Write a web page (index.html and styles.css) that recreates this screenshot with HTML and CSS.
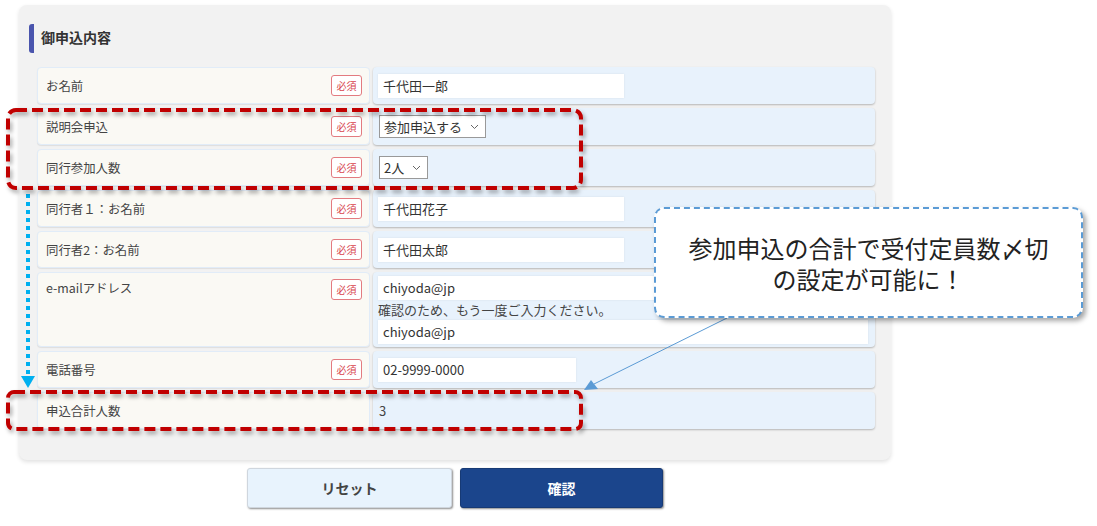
FILE: index.html
```html
<!DOCTYPE html>
<html lang="ja">
<head>
  <meta charset="UTF-8">
  <title>御申込内容</title>
  <link rel="stylesheet" href="styles.css">
</head>
<body>
  <div class="page">
    <div class="panel">
      <h2 class="panel-title">御申込内容</h2>

      <div class="rows">
        <div class="row">
          <div class="label">お名前<span class="req">必須</span></div>
          <div class="value"><div class="input w-name">千代田一郎</div></div>
        </div>
        <div class="row">
          <div class="label">説明会申込<span class="req">必須</span></div>
          <div class="value">
            <div class="select">参加申込する<svg width="9" height="6" viewBox="0 0 9 6"><path d="M1 1l3.5 3.5L8 1" fill="none" stroke="#666" stroke-width="1"/></svg></div>
          </div>
        </div>
        <div class="row">
          <div class="label">同行参加人数<span class="req">必須</span></div>
          <div class="value">
            <div class="select">2人<svg width="9" height="6" viewBox="0 0 9 6"><path d="M1 1l3.5 3.5L8 1" fill="none" stroke="#666" stroke-width="1"/></svg></div>
          </div>
        </div>
        <div class="row">
          <div class="label">同行者１：お名前<span class="req">必須</span></div>
          <div class="value"><div class="input w-name">千代田花子</div></div>
        </div>
        <div class="row">
          <div class="label">同行者2：お名前<span class="req">必須</span></div>
          <div class="value"><div class="input w-name">千代田太郎</div></div>
        </div>
        <div class="row row-tall">
          <div class="label">e-mailアドレス<span class="req">必須</span></div>
          <div class="value value-stack">
            <div class="input w-full">chiyoda@jp</div>
            <div class="note">確認のため、もう一度ご入力ください。</div>
            <div class="input w-full">chiyoda@jp</div>
          </div>
        </div>
        <div class="row">
          <div class="label">電話番号<span class="req">必須</span></div>
          <div class="value"><div class="input w-tel">02-9999-0000</div></div>
        </div>
        <div class="row">
          <div class="label">申込合計人数</div>
          <div class="value"><span class="plain">3</span></div>
        </div>
      </div>
    </div>

    <div class="actions">
      <button class="btn btn-reset">リセット</button>
      <button class="btn btn-confirm">確認</button>
    </div>

    <!-- annotations drawn over the form -->
    <svg class="marks" width="1097" height="526" viewBox="0 0 1097 526">
      <defs>
        <filter id="sh" x="-5%" y="-20%" width="110%" height="150%">
          <feDropShadow dx="2" dy="3" stdDeviation="2" flood-color="#000" flood-opacity="0.35"/>
        </filter>
      </defs>
      <line x1="28" y1="194" x2="28" y2="377" stroke="#00b0f0" stroke-width="4" stroke-dasharray="4 4"/>
      <polygon points="21,376 35,376 28,388" fill="#00b0f0"/>
      <rect x="8" y="110" width="573" height="78" rx="8" fill="none" stroke="#c00000" stroke-width="4" stroke-dasharray="11 5" filter="url(#sh)"/>
      <rect x="8" y="392" width="573" height="37" rx="6" fill="none" stroke="#c00000" stroke-width="4" stroke-dasharray="11 5" filter="url(#sh)"/>
      <line x1="727" y1="318" x2="594" y2="384" stroke="#5b9bd5" stroke-width="1"/>
      <polygon points="584,390 591,380 598,389" fill="#5b9bd5"/>
    </svg>

    <div class="callout">参加申込の合計で受付定員数〆切<br>の設定が可能に！</div>
  </div>
</body>
</html>
```

FILE: styles.css
```css
body { margin: 0; background: #fff; font-family: "Noto Sans CJK JP", "Noto Sans", sans-serif; color: #333; }
.page { position: relative; width: 1097px; height: 526px; overflow: hidden; }

.panel { box-sizing: border-box; width: 872px; margin: 5px 0 0 19px; padding: 19px 16px 31px 10px; background: #f2f2f2; border-radius: 8px; box-shadow: 0 2px 4px rgba(0,0,0,0.12); }
.panel-title { margin: 0 0 14px; height: 29px; border-left: 5px solid #4a55ad; border-radius: 3px; padding-left: 7px; font-size: 14px; font-weight: bold; line-height: 27px; color: #333; }

.rows { margin-left: 8px; display: flex; flex-direction: column; gap: 4px; }
.row { display: flex; gap: 3px; height: 37px; }
.row-tall { height: 75px; }

.label { box-sizing: border-box; width: 333px; flex: none; display: flex; justify-content: space-between; align-items: center; padding: 0 7px 0 8px; background: #faf9f4; border: 1px solid #e1ecf8; border-radius: 4px; font-size: 12.4px; color: #444; box-shadow: 0 1px 1px rgba(0,0,0,0.08); }
.row-tall .label { align-items: flex-start; padding-top: 6px; }
.req { display: inline-block; width: 31px; height: 21px; box-sizing: border-box; border: 1px solid #e37b80; border-radius: 3px; background: #fff; color: #d8454d; font-size: 10px; line-height: 19px; text-align: center; }

.value { flex: 1; box-sizing: border-box; display: flex; align-items: center; padding: 0 7px 0 5px; background: #e8f2fc; border-radius: 4px; box-shadow: 0 1px 2px rgba(0,0,0,0.25); }
.value-stack { flex-direction: column; align-items: flex-start; justify-content: flex-start; padding-top: 4px; }

.input { box-sizing: border-box; height: 24px; padding: 0 5px; background: #fff; font-size: 13px; line-height: 24px; color: #333; box-shadow: 0 0 2px rgba(0,0,0,0.08); }
.w-name { width: 246px; }
.w-tel { width: 198px; }
.w-full { width: 490px; }
.note { font-size: 13px; line-height: 20px; color: #444; }

.select { box-sizing: border-box; height: 23px; display: flex; align-items: center; gap: 8px; padding: 0 6px 0 4px; margin-left: 1px; background: #fff; border: 1px solid #999; font-size: 13px; color: #333; }
.plain { font-size: 13px; color: #444; padding-left: 1px; }

.actions { display: flex; gap: 8px; margin: 8px 0 0 247px; }
.btn { box-sizing: border-box; width: 205px; height: 40px; border-radius: 3px; font-family: inherit; font-size: 14px; font-weight: bold; cursor: pointer; box-shadow: 1px 1px 2px rgba(0,0,0,0.45); }
.btn-reset { background: #e8f3fd; border: 1px solid #cfd6de; color: #444; }
.btn-confirm { width: 203px; background: #1b458c; border: 1px solid #173a75; color: #fff; }

.marks { position: absolute; top: 0; left: 0; pointer-events: none; }
.callout { position: absolute; left: 654px; top: 207px; box-sizing: border-box; width: 429px; height: 111px; display: flex; align-items: center; justify-content: center; text-align: center; background: #fff; border: 2px dashed #5b9bd5; border-radius: 10px; box-shadow: 3px 3px 5px rgba(0,0,0,0.35); font-size: 24px; line-height: 31px; color: #222; }
```
